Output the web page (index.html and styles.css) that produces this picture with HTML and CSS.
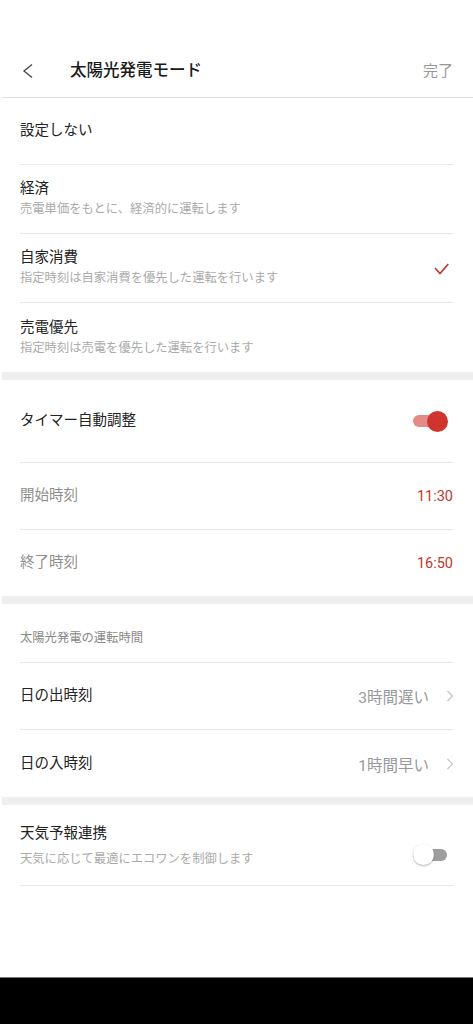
FILE: index.html
```html
<!DOCTYPE html>
<html lang="ja">
<head>
    <meta charset="UTF-8">
    <meta name="viewport" content="width=device-width, initial-scale=1.0">
    <title>太陽光発電モード</title>
    <link rel="stylesheet" href="styles.css">
</head>
<body>
<div class="screen">
    <!-- App bar -->
    <header class="app-bar">
        <svg class="back-icon" width="14" height="16" viewBox="0 0 14 16">
            <polyline points="12,1.5 4,8 12,14.5" fill="none" stroke="#444" stroke-width="1.3"/>
        </svg>
        <h1 class="app-title">太陽光発電モード</h1>
        <span class="app-action">完了</span>
    </header>

    <!-- Mode options -->
    <ul class="option-list">
        <li class="option option-single">
            <div class="option-title">設定しない</div>
        </li>
        <li class="option">
            <div class="option-text">
                <div class="option-title">経済</div>
                <div class="option-desc">売電単価をもとに、経済的に運転します</div>
            </div>
        </li>
        <li class="option">
            <div class="option-text">
                <div class="option-title">自家消費</div>
                <div class="option-desc">指定時刻は自家消費を優先した運転を行います</div>
            </div>
            <svg class="check-icon" width="16" height="14" viewBox="0 0 16 14">
                <polyline points="1,6 6,11.5 14.3,2" fill="none" stroke="#c0392b" stroke-width="1.7"/>
            </svg>
        </li>
        <li class="option option-last">
            <div class="option-text">
                <div class="option-title">売電優先</div>
                <div class="option-desc">指定時刻は売電を優先した運転を行います</div>
            </div>
        </li>
    </ul>

    <div class="section-gap"></div>

    <!-- Timer -->
    <div class="setting-row setting-row-tall">
        <span class="setting-label">タイマー自動調整</span>
        <span class="toggle toggle-on"><span class="toggle-thumb"></span></span>
    </div>
    <div class="setting-row">
        <span class="setting-label setting-label-muted">開始時刻</span>
        <span class="setting-time">11:30</span>
    </div>
    <div class="setting-row setting-row-last">
        <span class="setting-label setting-label-muted">終了時刻</span>
        <span class="setting-time">16:50</span>
    </div>

    <div class="section-gap"></div>

    <!-- Operating hours -->
    <div class="section-label">太陽光発電の運転時間</div>
    <div class="setting-row">
        <span class="setting-label">日の出時刻</span>
        <span class="setting-value">3時間遅い</span>
        <svg class="chevron-icon" width="8" height="12" viewBox="0 0 8 12">
            <polyline points="1.5,1 6.5,6 1.5,11" fill="none" stroke="#c4c4c4" stroke-width="1.1"/>
        </svg>
    </div>
    <div class="setting-row setting-row-last setting-row-67">
        <span class="setting-label">日の入時刻</span>
        <span class="setting-value">1時間早い</span>
        <svg class="chevron-icon" width="8" height="12" viewBox="0 0 8 12">
            <polyline points="1.5,1 6.5,6 1.5,11" fill="none" stroke="#c4c4c4" stroke-width="1.1"/>
        </svg>
    </div>

    <div class="section-gap"></div>

    <!-- Weather forecast -->
    <div class="setting-row weather-row">
        <div class="option-text">
            <div class="option-title">天気予報連携</div>
            <div class="option-desc weather-desc">天気に応じて最適にエコワンを制御します</div>
        </div>
        <span class="toggle toggle-off"><span class="toggle-thumb"></span></span>
    </div>

    <div class="nav-bar"></div>
</div>
</body>
</html>
```

FILE: styles.css
```css
body {
    margin: 0;
    background: #fff;
    font-family: Roboto, "Noto Sans CJK JP", sans-serif;
    color: #222;
}

.screen {
    display: flex;
    flex-direction: column;
    height: 100vh;
}

/* App bar */
.app-bar {
    display: flex;
    align-items: center;
    box-sizing: border-box;
    height: 98px;
    padding: 44px 20px 0 20px;
    margin-left: 2px;
    border-bottom: 1px solid #e2e2e2;
}

.back-icon {
    margin-left: -2px;
}

.app-title {
    margin: 0 0 0 36px;
    font-size: 16.5px;
    font-weight: 500;
    line-height: 20px;
    color: #1a1a1a;
}

.app-action {
    margin-left: auto;
    font-size: 15px;
    line-height: 20px;
    color: #999;
}

/* Option list */
.option-list {
    list-style: none;
    margin: 0;
    padding: 0;
}

.option {
    display: flex;
    align-items: center;
    height: 68px;
    margin: 0 20px;
    border-bottom: 1px solid #e8e8e8;
}

.option-single {
    height: 66px;
}

.option-last {
    height: 69px;
    border-bottom: none;
}

.option-title {
    font-size: 14.5px;
    line-height: 20px;
}

.option-desc {
    font-size: 12.3px;
    line-height: 20px;
    color: #aaa;
}

.check-icon {
    margin-left: auto;
    margin-right: 3px;
    margin-top: 2px;
}

.section-gap {
    height: 8px;
    margin-left: 2px;
    background: #efefef;
}

/* Setting rows */
.setting-row {
    display: flex;
    align-items: center;
    height: 66px;
    margin: 0 20px;
    border-bottom: 1px solid #e8e8e8;
}

.setting-row-tall {
    height: 82px;
}

.setting-row-last {
    border-bottom: none;
}

.setting-row-67 {
    height: 67px;
}

.setting-label {
    font-size: 14.5px;
    line-height: 20px;
}

.setting-label-muted {
    color: #8e8e8e;
}

.setting-time {
    margin-left: auto;
    font-size: 14.5px;
    color: #c0392b;
}

.setting-value {
    margin-left: auto;
    font-size: 15.5px;
    color: #999;
}

.chevron-icon {
    margin-left: 17px;
    margin-right: -1px;
}

.section-label {
    display: flex;
    align-items: center;
    box-sizing: border-box;
    height: 59px;
    padding-top: 7px;
    margin: 0 20px;
    border-bottom: 1px solid #e8e8e8;
    font-size: 12.3px;
    color: #888;
}

.weather-row {
    align-items: flex-start;
    box-sizing: border-box;
    height: 81px;
    padding-top: 19px;
}

.weather-desc {
    margin-top: 5px;
}

/* Toggles */
.toggle {
    position: relative;
    width: 35px;
    height: 21px;
    margin-left: auto;
    margin-right: 5px;
}

.toggle::before {
    content: "";
    position: absolute;
    left: 0;
    top: 4.5px;
    width: 34px;
    height: 12px;
    border-radius: 6px;
}

.toggle-thumb {
    position: absolute;
    top: 0;
    width: 21px;
    height: 21px;
    border-radius: 50%;
}

.toggle-on::before {
    background: #e58b86;
}

.toggle-on .toggle-thumb {
    right: 0;
    background: #cf342e;
}

.toggle-off {
    align-self: center;
}

.toggle-off::before {
    background: #9e9e9e;
}

.toggle-off .toggle-thumb {
    left: 0;
    background: #fff;
    box-shadow: 0 1px 2px rgba(0, 0, 0, 0.3);
}

.nav-bar {
    margin-top: auto;
    height: 46px;
    background: #000;
    border-top: 1px solid #777;
}
```
